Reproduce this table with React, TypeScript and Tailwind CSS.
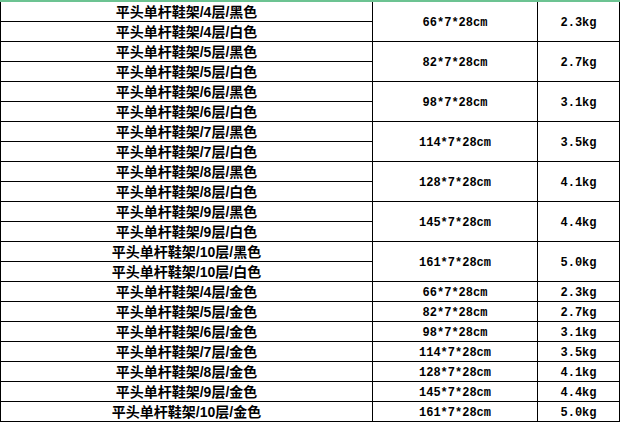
import React from 'react';

type Group = { tiers: number; size: string; weight: string };

const groups: Group[] = [
  { tiers: 4, size: '66*7*28cm', weight: '2.3kg' },
  { tiers: 5, size: '82*7*28cm', weight: '2.7kg' },
  { tiers: 6, size: '98*7*28cm', weight: '3.1kg' },
  { tiers: 7, size: '114*7*28cm', weight: '3.5kg' },
  { tiers: 8, size: '128*7*28cm', weight: '4.1kg' },
  { tiers: 9, size: '145*7*28cm', weight: '4.4kg' },
  { tiers: 10, size: '161*7*28cm', weight: '5.0kg' },
];

const nameCell =
  "h-[20px] p-0 pt-[2px] border border-black text-center align-middle text-[14px] font-bold leading-none text-black [font-family:'Liberation_Sans','Noto_Sans_CJK_SC',sans-serif]";
const monoCell =
  "p-0 pt-[3px] border border-black text-center align-middle text-[12px] font-bold leading-none text-black [font-family:'Liberation_Mono','Noto_Sans_CJK_SC',monospace]";

export default function App() {
  return (
    <div className="w-[621px] h-[423px] bg-white overflow-hidden">
      <table className="border-collapse table-fixed w-[619px] border-t-2 border-t-[#6cc392]">
        <colgroup>
          <col className="w-[372px]" />
          <col className="w-[165px]" />
          <col className="w-[82px]" />
        </colgroup>
        <tbody>
          {groups.flatMap((g) => [
            <tr key={`${g.tiers}-b`}>
              <td className={nameCell}>平头单杆鞋架/{g.tiers}层/黑色</td>
              <td rowSpan={2} className={monoCell}>
                {g.size}
              </td>
              <td rowSpan={2} className={monoCell}>
                {g.weight}
              </td>
            </tr>,
            <tr key={`${g.tiers}-w`}>
              <td className={nameCell}>平头单杆鞋架/{g.tiers}层/白色</td>
            </tr>,
          ])}
          {groups.map((g) => (
            <tr key={`${g.tiers}-g`}>
              <td className={nameCell}>平头单杆鞋架/{g.tiers}层/金色</td>
              <td className={monoCell}>{g.size}</td>
              <td className={monoCell}>{g.weight}</td>
            </tr>
          ))}
        </tbody>
      </table>
    </div>
  );
}
